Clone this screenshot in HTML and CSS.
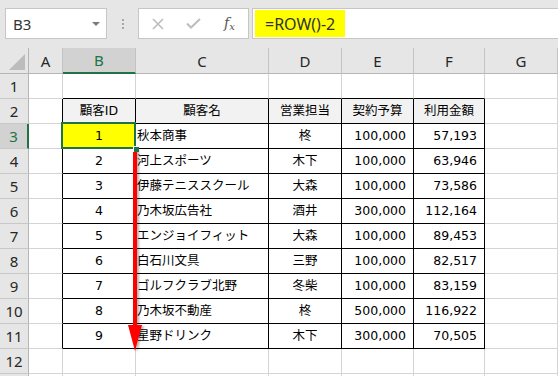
FILE: index.html
```html
<!DOCTYPE html>
<html lang="ja">
<head>
<meta charset="utf-8">
<title>Excel ROW</title>
<link rel="stylesheet" href="styles.css">
</head>
<body>
<div class="top">
  <div class="namebox"><span class="nb-text">B3</span><span class="dd"></span></div>
  <div class="dots"><i></i><i></i><i></i></div>
  <div class="btns">
    <svg class="ico" width="14" height="12" viewBox="0 0 14 12"><path d="M2 1 L12 11 M12 1 L2 11" stroke="#bdbdbd" stroke-width="1.6" fill="none"/></svg>
    <svg class="ico" width="15" height="11" viewBox="0 0 15 11"><path d="M1 5.5 L5 9.5 L14 1" stroke="#bdbdbd" stroke-width="2" fill="none"/></svg>
    <span class="fx">f<sub>x</sub></span>
  </div>
  <div class="formula"><span class="hl">=ROW()-2</span></div>
</div>
<div class="sheet">
  <div class="c ch corner"><span class="tri"></span></div>
  <div class="c ch">A</div>
  <div class="c ch selc">B</div>
  <div class="c ch">C</div>
  <div class="c ch">D</div>
  <div class="c ch">E</div>
  <div class="c ch">F</div>
  <div class="c ch">G</div>
  <div class="c ch last"></div>

  <div class="c rh">1</div>
  <div class="c"></div>
  <div class="c tt"></div><div class="c tt"></div><div class="c tt"></div><div class="c tt"></div><div class="c tt"></div>
  <div class="c"></div><div class="c last"></div>

  <div class="c rh">2</div>
  <div class="c tl"></div>
  <div class="c t hd">顧客ID</div><div class="c t hd">顧客名</div><div class="c t hd">営業担当</div><div class="c t hd">契約予算</div><div class="c t hd">利用金額</div>
  <div class="c"></div><div class="c last"></div>

  <div class="c rh selr">3</div>
  <div class="c tl"></div>
  <div class="c t ctr sel">1</div><div class="c t txt">秋本商事</div><div class="c t ctr">柊</div><div class="c t num">100,000</div><div class="c t num">57,193</div>
  <div class="c"></div><div class="c last"></div>

  <div class="c rh">4</div>
  <div class="c tl"></div>
  <div class="c t ctr">2</div><div class="c t txt">河上スポーツ</div><div class="c t ctr">木下</div><div class="c t num">100,000</div><div class="c t num">63,946</div>
  <div class="c"></div><div class="c last"></div>

  <div class="c rh">5</div>
  <div class="c tl"></div>
  <div class="c t ctr">3</div><div class="c t txt">伊藤テニススクール</div><div class="c t ctr">大森</div><div class="c t num">100,000</div><div class="c t num">73,586</div>
  <div class="c"></div><div class="c last"></div>

  <div class="c rh">6</div>
  <div class="c tl"></div>
  <div class="c t ctr">4</div><div class="c t txt">乃木坂広告社</div><div class="c t ctr">酒井</div><div class="c t num">300,000</div><div class="c t num">112,164</div>
  <div class="c"></div><div class="c last"></div>

  <div class="c rh">7</div>
  <div class="c tl"></div>
  <div class="c t ctr">5</div><div class="c t txt">エンジョイフィット</div><div class="c t ctr">大森</div><div class="c t num">100,000</div><div class="c t num">89,453</div>
  <div class="c"></div><div class="c last"></div>

  <div class="c rh">8</div>
  <div class="c tl"></div>
  <div class="c t ctr">6</div><div class="c t txt">白石川文具</div><div class="c t ctr">三野</div><div class="c t num">100,000</div><div class="c t num">82,517</div>
  <div class="c"></div><div class="c last"></div>

  <div class="c rh">9</div>
  <div class="c tl"></div>
  <div class="c t ctr">7</div><div class="c t txt">ゴルフクラブ北野</div><div class="c t ctr">冬柴</div><div class="c t num">100,000</div><div class="c t num">83,159</div>
  <div class="c"></div><div class="c last"></div>

  <div class="c rh">10</div>
  <div class="c tl"></div>
  <div class="c t ctr">8</div><div class="c t txt">乃木坂不動産</div><div class="c t ctr">柊</div><div class="c t num">500,000</div><div class="c t num">116,922</div>
  <div class="c"></div><div class="c last"></div>

  <div class="c rh">11</div>
  <div class="c tl"></div>
  <div class="c t ctr">9</div><div class="c t txt">星野ドリンク</div><div class="c t ctr">木下</div><div class="c t num">300,000</div><div class="c t num">70,505</div>
  <div class="c"></div><div class="c last"></div>

  <div class="c rh">12</div>
  <div class="c"></div><div class="c"></div><div class="c"></div><div class="c"></div><div class="c"></div><div class="c"></div><div class="c"></div><div class="c last"></div>

  <div class="c rh"></div>
  <div class="c"></div><div class="c"></div><div class="c"></div><div class="c"></div><div class="c"></div><div class="c"></div><div class="c"></div><div class="c last"></div>
</div>
<svg class="arrow" width="558" height="376" viewBox="0 0 558 376">
  <defs>
    <filter id="sh" x="-50%" y="-10%" width="200%" height="120%">
      <feDropShadow dx="2" dy="1" stdDeviation="1.2" flood-color="#000" flood-opacity="0.3"/>
    </filter>
  </defs>
  <g filter="url(#sh)">
    <rect x="133" y="149" width="4" height="178" fill="#ff0000"/>
    <polygon points="128,325 142,325 135,351" fill="#ff0000"/>
  </g>
</svg>
</body>
</html>
```

FILE: styles.css
```css
html, body {
  margin: 0;
  padding: 0;
}
body {
  width: 558px;
  height: 376px;
  overflow: hidden;
  position: relative;
  background: #ffffff;
  font-family: "DejaVu Sans", "Noto Sans CJK JP", sans-serif;
}

/* formula bar */
.top {
  height: 48px;
  box-sizing: border-box;
  background: #e6e6e6;
  padding-top: 8px;
  display: flex;
  align-items: flex-start;
}
.namebox {
  margin-left: 5px;
  width: 102px;
  height: 31px;
  box-sizing: border-box;
  background: #fff;
  border: 1px solid #c6c6c6;
  display: flex;
  align-items: center;
  justify-content: space-between;
  padding: 0 6px 0 7px;
}
.nb-text {
  font-family: "Noto Sans", sans-serif;
  font-size: 15px;
  color: #333;
}
.dd {
  width: 0;
  height: 0;
  border-left: 4px solid transparent;
  border-right: 4px solid transparent;
  border-top: 4px solid #7a7a7a;
  margin-top: 1px;
}
.dots {
  width: 31px;
  height: 31px;
  display: flex;
  flex-direction: column;
  align-items: center;
  justify-content: center;
  gap: 2px;
}
.dots i {
  display: block;
  width: 2px;
  height: 2px;
  background: #a8a8a8;
}
.btns {
  width: 111px;
  height: 31px;
  box-sizing: border-box;
  background: #fff;
  border: 1px solid #c6c6c6;
  display: flex;
  align-items: center;
  padding-left: 12px;
}
.ico {
  display: block;
}
.ico + .ico {
  margin-left: 21px;
}
.fx {
  margin-left: 23px;
  font-family: "DejaVu Serif", serif;
  font-style: italic;
  font-size: 14px;
  color: #555;
  line-height: 1;
}
.fx sub {
  font-size: 10px;
  vertical-align: -2px;
}
.formula {
  margin-left: 3px;
  flex: 1;
  height: 31px;
  box-sizing: border-box;
  background: #fff;
  border: 1px solid #c6c6c6;
  border-right: none;
  display: flex;
  align-items: center;
  padding-left: 2px;
}
.hl {
  background: #ffff00;
  height: 27px;
  display: flex;
  align-items: center;
  padding: 0 10px 0 10px;
  font-family: "Noto Sans", sans-serif;
  font-size: 16px;
  color: #333;
}

/* sheet */
.sheet {
  display: grid;
  grid-template-columns: 29px 34px 73px 133px 73px 72px 71px 73px 1fr;
  grid-template-rows: 26px;
  grid-auto-rows: 25px;
}
.c {
  box-sizing: border-box;
  border-right: 1px solid #d4d4d4;
  border-bottom: 1px solid #d4d4d4;
  display: flex;
  align-items: center;
  white-space: nowrap;
  overflow: hidden;
  font-size: 12.5px;
  line-height: 1;
  color: #000;
}
.c.last {
  border-right: none;
}
.ch {
  background: #e6e6e6;
  border-right-color: #c3c3c3;
  border-bottom-color: #b5b5b5;
  justify-content: center;
  font-family: "Noto Sans", sans-serif;
  font-size: 15px;
  color: #262626;
  padding-top: 1px;
}
.corner {
  position: relative;
  border-right-color: #b5b5b5;
}
.tri {
  position: absolute;
  right: 3px;
  bottom: 3px;
  width: 0;
  height: 0;
  border-left: 16px solid transparent;
  border-bottom: 16px solid #bcbcbc;
}
.ch.selc {
  background: #d2d2d2;
  color: #217346;
  border-bottom: 2px solid #217346;
}
.rh {
  background: #e6e6e6;
  border-right-color: #b5b5b5;
  border-bottom-color: #c8c8c8;
  justify-content: center;
  font-family: "Noto Sans", sans-serif;
  font-size: 15px;
  color: #262626;
}
.rh.selr {
  background: #d2d2d2;
  color: #217346;
  border-right: 2px solid #217346;
}
.tt {
  border-bottom-color: #000;
}
.tl {
  border-right-color: #000;
}
.t {
  border-right-color: #000;
  border-bottom-color: #000;
}
.hd {
  background: #f2f2f2;
  justify-content: center;
}
.ctr {
  justify-content: center;
}
.txt {
  padding-left: 1px;
}
.num {
  justify-content: flex-end;
  padding-right: 7px;
}
.sel {
  background: #ffff00;
  position: relative;
  overflow: visible;
}
.sel::after {
  content: "";
  position: absolute;
  left: -2px;
  top: -2px;
  right: -1px;
  bottom: -1px;
  border: 2px solid #217346;
}
.sel::before {
  content: "";
  position: absolute;
  right: -4px;
  bottom: -4px;
  width: 5px;
  height: 5px;
  background: #217346;
  border-left: 1px solid #fff;
  border-top: 1px solid #fff;
  z-index: 2;
}

.arrow {
  position: absolute;
  left: 0;
  top: 0;
  pointer-events: none;
}
```
